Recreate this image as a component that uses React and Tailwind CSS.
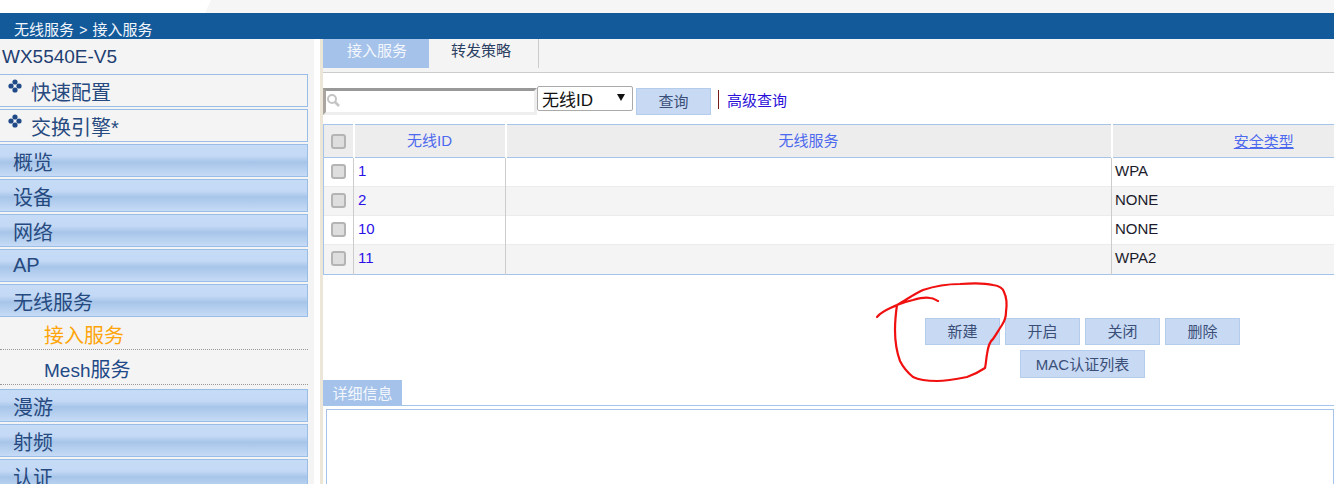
import React from 'react';

const FONT = "font-['Liberation_Sans','Noto_Sans_CJK_SC',sans-serif]";

const navBar =
  'mb-[2px] h-[33px] w-[308px] border border-l-0 border-[#98bde6] bg-[linear-gradient(to_bottom,#c6dbf6_0%,#c4d9f5_35%,#a7c5e9_55%,#c6dbf6_100%)] pl-[13px] text-[20px] text-[#264a80]';

const quickItems = ['快速配置', '交换引擎*'];
const topNav = ['概览', '设备', '网络', 'AP', '无线服务'];
const bottomNav = ['漫游', '射频', '认证'];

const rows = [
  { id: '1', type: 'WPA' },
  { id: '2', type: 'NONE' },
  { id: '10', type: 'NONE' },
  { id: '11', type: 'WPA2' },
];

const Diamond = () => (
  <svg className="absolute left-[8px] top-[4px]" width="14" height="14" viewBox="0 0 14 14" fill="#1f4a87">
    <circle cx="7" cy="3" r="2.6" />
    <circle cx="3" cy="7" r="2.6" />
    <circle cx="11" cy="7" r="2.6" />
    <circle cx="7" cy="11" r="2.6" />
  </svg>
);

const Check = () => (
  <span className="block h-[15px] w-[15px] rounded-[3px] border-2 border-[#b4b4b4] bg-[#dedede]" />
);

const Btn = ({ children, className = 'w-[75px]' }) => (
  <button className={`h-[27px] border border-[#b4cdec] bg-[#c8d9f3] text-center text-[15px] leading-[25px] text-[#3a4f78] ${className}`}>
    {children}
  </button>
);

const App = () => {
  return (
    <div className={`relative h-[484px] w-[1334px] overflow-hidden bg-white ${FONT}`}>
      {/* top strip */}
      <div className="relative h-[13px] bg-white">
        <div className="absolute inset-y-0 left-[205px] right-0 bg-[#f6f6f6] [clip-path:polygon(6px_0,100%_0,100%_100%,0_100%)]" />
      </div>

      {/* breadcrumb */}
      <div className="h-[26px] bg-[#135a9b] pl-[14px] pt-[8px] text-[15px] leading-[18px] text-[#f2f6fb]">
        无线服务 <span className="mx-[1px] text-[14px]">&gt;</span> 接入服务
      </div>

      <div className="flex h-[445px]">
        {/* sidebar */}
        <div className="w-[314px] shrink-0 bg-[#f4f4f4]">
          <div className="h-[35px] pl-[2px] text-[19px] leading-[35px] text-[#1f3f73]">WX5540E-V5</div>
          {quickItems.map((item) => (
            <div
              key={item}
              className="relative mb-[2px] h-[33px] w-[308px] border border-l-0 border-[#98bde6] pl-[31px] text-[20px] leading-[36px] text-[#264a80]"
            >
              <Diamond />
              {item}
            </div>
          ))}
          {topNav.map((item) => (
            <div key={item} className={`${navBar} ${item === 'AP' ? 'leading-[31px]' : 'leading-[36px]'}`}>
              {item}
            </div>
          ))}
          <div className="-mt-[2px] h-[33px] w-[308px] border-b border-dotted border-[#999] pl-[44px] text-[20px] leading-[38px] text-[#ffa50a]">
            接入服务
          </div>
          <div className="mb-[4px] h-[35px] w-[308px] border-b border-dotted border-[#999] pl-[44px] text-[20px] leading-[40px] text-[#1f4a87]">
            <span className="text-[19px]">Mesh</span>服务
          </div>
          {bottomNav.map((item) => (
            <div key={item} className={`${navBar} leading-[36px]`}>
              {item}
            </div>
          ))}
        </div>

        {/* beige divider */}
        <div className="w-[6px] shrink-0 bg-white" />
        <div className="w-[3px] shrink-0 bg-[#ebe6d8]" />

        {/* main */}
        <div className="min-w-0 flex-1 bg-white">
          <div className="flex h-[34px] border-b border-[#cccccc] bg-[#f4f4f4] pb-[4px]">
            <div className="h-[29px] w-[106px] bg-[#a4c2ea] pl-[2px] text-center text-[15px] leading-[23px] text-[#f4f7fc]">接入服务</div>
            <div className="h-[29px] w-[110px] border-r border-[#cccccc] pr-[5px] text-center text-[15px] leading-[23px] text-[#2b3f63]">转发策略</div>
          </div>

          <div className="flex h-[51px] items-start pt-[13px]">
            <div className="relative mt-[2px] h-[27px] w-[214px] border-t-[3px] border-r-[3px] border-b-[3px] border-l-[3px] border-t-[#999] border-r-[#eee] border-b-[#eee] border-l-[#aaa5a0] bg-white">
              <svg className="absolute left-[0px] top-[2px]" width="15" height="15" viewBox="0 0 15 15" fill="none" stroke="#c4c4c4">
                <circle cx="6" cy="6" r="4" strokeWidth="2" />
                <path d="M9 9l4 4" strokeWidth="2.5" />
              </svg>
            </div>
            <div className="relative h-[25px] w-[96px] rounded-[2px] border border-[#aaa] bg-white pl-[4px] text-[17px] leading-[27px] text-[#111]">
              无线ID
              <span className="absolute right-[7px] top-[7px] h-0 w-0 border-x-[4px] border-t-[7px] border-x-transparent border-t-[#111]" />
            </div>
            <Btn className="ml-[3px] mt-[2px] w-[75px]">查询</Btn>
            <div className="ml-[7px] mt-[4px] h-[19px] w-[1px] bg-[#7a1c1c]" />
            <a className="ml-[8px] mt-[5px] text-[15px] leading-[20px] text-[#2a10d8]">高级查询</a>
          </div>

          {/* table runs past the window edge, as in the page */}
          <table className="w-[1092px] table-fixed border-collapse text-[15px]">
            <colgroup>
              <col className="w-[30px]" />
              <col className="w-[152px]" />
              <col className="w-[606px]" />
              <col />
            </colgroup>
            <thead>
              <tr className="h-[33px] border-y border-[#a6c4ea] bg-[#ededed] text-[#4d69ee]">
                <th className="border-l border-[#a6c4ea] pl-[7px] font-normal"><Check /></th>
                <th className="border-l-2 border-white font-normal">无线ID</th>
                <th className="border-l-2 border-white font-normal">无线服务</th>
                <th className="border-l-2 border-white pt-[2px] font-normal underline">安全类型</th>
              </tr>
            </thead>
            <tbody>
              {rows.map((row, i) => (
                <tr key={row.id} className={`border-b ${i === 3 ? 'h-[30px] border-[#a6c4ea]' : 'h-[29px] border-[#ececec]'} ${i % 2 ? 'bg-[#f4f4f4]' : 'bg-white'}`}>
                  <td className="border-l border-[#a6c4ea] pb-[2px] pl-[7px]"><Check /></td>
                  <td className="border-l border-[#cccccc] pb-[2px] pl-[4px] text-[#2a10e8]">{row.id}</td>
                  <td className="border-l border-[#cccccc]" />
                  <td className="border-l border-[#cccccc] pb-[2px] pl-[3px] text-[#1b1b2b]">{row.type}</td>
                </tr>
              ))}
            </tbody>
          </table>

          {/* actions */}
          <div className="ml-[602px] mt-[43px] flex w-[315px] flex-wrap justify-center gap-x-[5px] gap-y-[5px]">
            <Btn className="w-[75px] pb-[2px]">新建</Btn>
            <Btn className="w-[75px] pb-[2px]">开启</Btn>
            <Btn className="w-[75px] pb-[2px]">关闭</Btn>
            <Btn className="w-[75px] pb-[2px]">删除</Btn>
            <Btn className="h-[28px] w-[125px]">MAC认证列表</Btn>
          </div>

          {/* details */}
          <div className="mt-[2px] h-[25px] w-[79px] bg-[#a4c2ea] text-center text-[15px] leading-[27px] text-[#f4f7fc]">详细信息</div>
          <div className="border-t border-[#a6c4ea] pl-[3px] pt-[3px]">
            <div className="h-[90px] border border-[#a6c4ea] bg-white" />
          </div>
        </div>
      </div>

      {/* red pen annotation */}
      <svg className="pointer-events-none absolute left-0 top-0" width="1334" height="484" fill="none" stroke="#f01010" strokeWidth="2.2" strokeLinecap="round" strokeLinejoin="round">
        <path d="M877 317C882 311 889 309 897 305C906 300 914 294 923 290C935 286 948 284 960 284C972 283 985 283 993 285C1000 286 1003 288 1004 292C1007 298 1007 305 1006 312C1006 318 1004 322 1002 325C998 331 996 335 993 339C989 342 988 347 987 354C986 360 986 364 985 368C979 372 973 375 967 377C957 379 947 381 937 381C928 381 919 380 913 377C907 372 903 367 900 361C896 350 895 340 895 330C895 320 896 312 897 305C902 303 908 301 913 300C920 298 926 297 930 298C933 298 936 300 938 301" />
      </svg>
    </div>
  );
};

export default App;
